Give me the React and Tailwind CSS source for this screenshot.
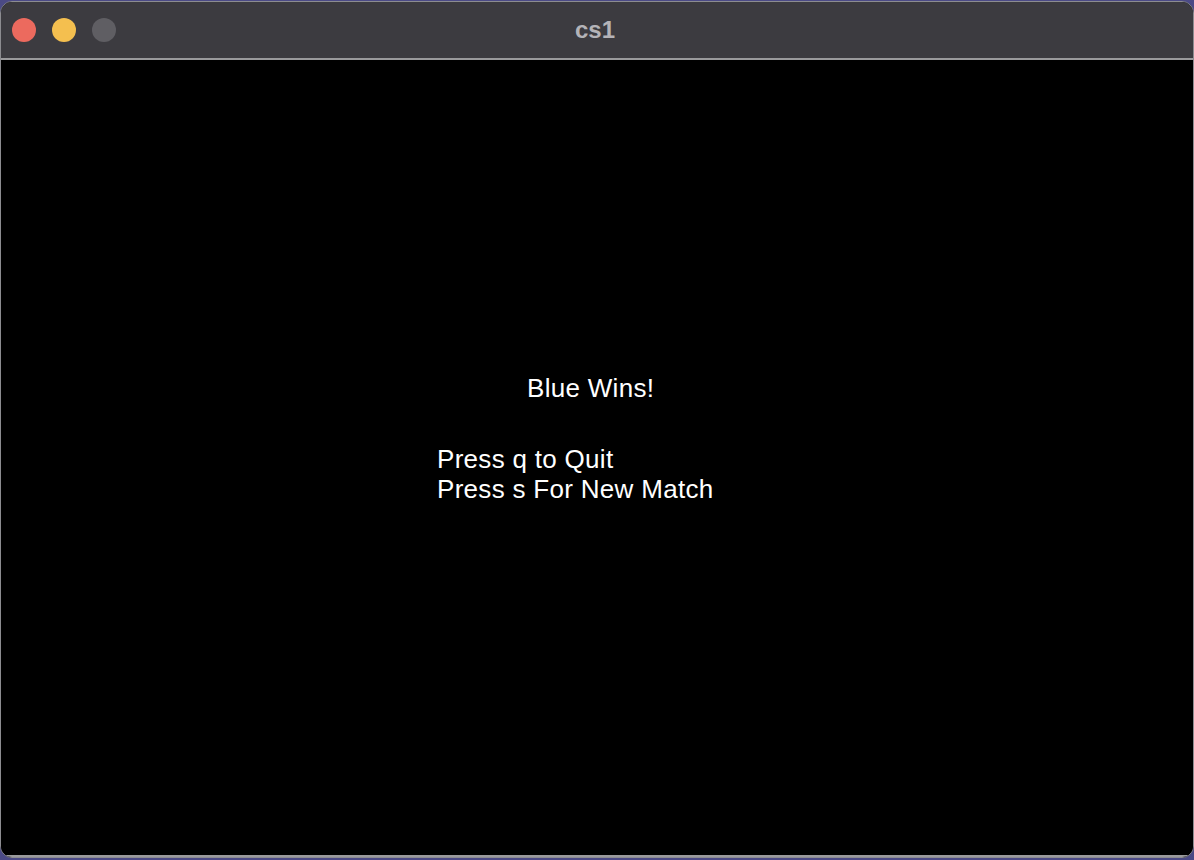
import React from "react";

const App = () => {
  return (
    <div className="w-[1194px] h-[860px] bg-[#4b4a86] pt-px">
      <div className="h-[857px] rounded-[12px] overflow-hidden border border-[#8c8c90] bg-black flex flex-col">
        {/* Title bar */}
        <div className="relative h-[58px] bg-[#3c3b40] border-b-2 border-[#9a9a9c] flex items-center shrink-0">
          <div className="flex items-center gap-4 pl-[11px]">
            <span className="w-6 h-6 rounded-full bg-[#ec6a5e]" />
            <span className="w-6 h-6 rounded-full bg-[#f4bf4f]" />
            <span className="w-6 h-6 rounded-full bg-[#5f5e63]" />
          </div>
          <div
            className="absolute inset-0 flex items-center justify-center pr-[4px] text-[24px] font-bold text-[#b4b3b8]"
            style={{ fontFamily: '"Liberation Sans", Arial, sans-serif' }}
          >
            cs1
          </div>
        </div>

        {/* Game screen */}
        <div
          className="flex-1 bg-black text-white text-[26px] tracking-[0.3px] border-b-2 border-[#9a9a9c]"
          style={{ fontFamily: '"Liberation Sans", Arial, sans-serif' }}
        >
          <div className="pt-[313px] pl-[526px] leading-[30px]">Blue Wins!</div>
          <div className="pt-[41px] pl-[436px] leading-[30px]">
            <div>Press q to Quit</div>
            <div>Press s For New Match</div>
          </div>
        </div>
      </div>
    </div>
  );
};

export default App;
